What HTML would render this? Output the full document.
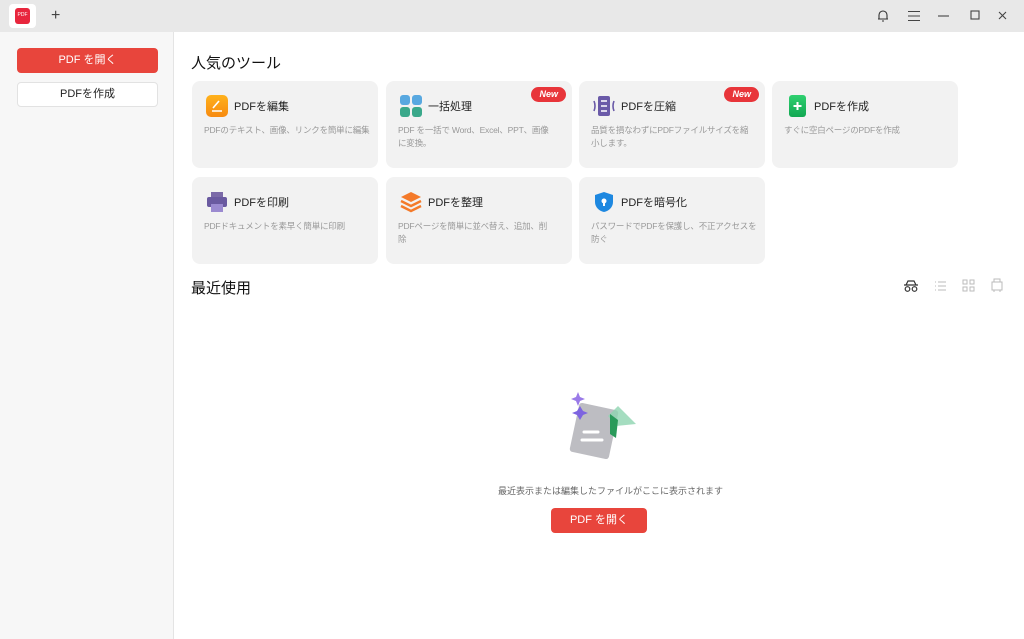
<!DOCTYPE html>
<html><head><meta charset="utf-8"><style>
*{margin:0;padding:0;box-sizing:border-box}
body{width:1024px;height:639px;overflow:hidden;background:#fff;font-family:"Liberation Sans","Noto Sans CJK JP",sans-serif;position:relative}
.tb{position:absolute;left:0;top:0;width:1024px;height:32px;background:#e8e8e8}
.side{position:absolute;left:0;top:32px;width:174px;height:607px;background:#f7f7f7;border-right:1px solid #e4e4e4}
.btn{position:absolute;left:17px;width:141px;height:25px;border-radius:4px;font-size:11px;text-align:center;line-height:25px}
.card{position:absolute;width:186px;height:87px;background:#f2f2f2;border-radius:8px}
.card .t{position:absolute;left:42px;top:17px;font-size:11px;color:#222}
.card .d{position:absolute;left:12px;top:43px;width:172px;font-size:8.5px;line-height:13px;color:#999;letter-spacing:-0.2px}
.card .ic{position:absolute;left:14px;top:14px;width:22px;height:22px}
.new{position:absolute;right:6px;top:6px;background:#e8353a;color:#fff;font-size:9px;font-weight:bold;font-style:italic;border-radius:8px;padding:1px 8px;line-height:13px}
h2{position:absolute;font-size:15px;font-weight:normal;color:#111}
</style></head><body>
<div class="tb">
<div style="position:absolute;left:9px;top:4px;width:27px;height:24px;background:#fff;border-radius:4px"><div style="position:absolute;left:6px;top:4px;width:15px;height:16px;background:#e8263d;border-radius:3px;color:#fff;font-size:5px;line-height:14px;text-align:center">PDF</div></div>
<div style="position:absolute;left:51px;top:7px;font-size:16px;color:#444">+</div>
<svg style="position:absolute;left:876px;top:9px" width="14" height="14" viewBox="0 0 14 14" fill="none" stroke="#333" stroke-width="1.1"><path d="M3 10V6a4 4 0 018 0v4H2h10M6 12h2"/></svg>
<svg style="position:absolute;left:907px;top:10px" width="14" height="12" stroke="#444" stroke-width="1.1"><path d="M1 1.5h12M1 6h12M1 10.5h12"/></svg>
<svg style="position:absolute;left:937px;top:10px" width="14" height="12" stroke="#444" stroke-width="1.1"><path d="M1 6h11"/></svg>
<svg style="position:absolute;left:970px;top:10px" width="12" height="12" fill="none" stroke="#444" stroke-width="1.1"><rect x="1" y="1" width="8" height="8"/></svg>
<svg style="position:absolute;left:998px;top:11px" width="10" height="10" stroke="#444" stroke-width="1.1"><path d="M1 1l7 7M8 1l-7 7"/></svg>
</div>
<div class="side">
<div class="btn" style="top:16px;background:#e8453c;color:#fff">PDF を開く</div>
<div class="btn" style="top:50px;background:#fff;border:1px solid #e2e2e2;color:#222;line-height:23px">PDFを作成</div>
</div>
<h2 style="left:191px;top:52px">人気のツール</h2>
<div class="card" style="left:192px;top:81px"><div class="ic" style="background:linear-gradient(#ffb21c,#f78a10);border-radius:5px"><svg width="22" height="22" stroke="#fff" stroke-width="1.6"><path d="M6 16h10M7 13l6-7"/></svg></div><div class="t">PDFを編集</div><div class="d">PDFのテキスト、画像、リンクを簡単に編集</div></div>
<div class="card" style="left:386px;top:81px"><div class="ic"><svg width="22" height="22"><rect x="0" y="0" width="10" height="10" rx="3" fill="#58a8e0"/><rect x="12" y="0" width="10" height="10" rx="3" fill="#58a8e0"/><rect x="0" y="12" width="10" height="10" rx="3" fill="#3aa88a"/><rect x="12" y="12" width="10" height="10" rx="3" fill="#3aa88a"/></svg></div><div class="t">一括処理</div><div class="d">PDF を一括で Word、Excel、PPT、画像<br>に変換。</div><div class="new">New</div></div>
<div class="card" style="left:579px;top:81px"><div class="ic"><svg width="24" height="22"><rect x="5" y="1" width="12" height="20" rx="2" fill="#6a5aa8"/><path d="M8 6h6M8 11h6M8 16h6" stroke="#fff" stroke-width="1.5"/><path d="M1 6q2 5 0 10M21 6q-2 5 0 10" stroke="#6a5aa8" stroke-width="1.6" fill="none"/></svg></div><div class="t">PDFを圧縮</div><div class="d">品質を損なわずにPDFファイルサイズを縮<br>小します。</div><div class="new">New</div></div>
<div class="card" style="left:772px;top:81px"><div class="ic" style="left:17px;width:17px;background:linear-gradient(#2fd070,#12a752);border-radius:3px"><svg width="17" height="22" stroke="#fff" stroke-width="2"><path d="M8.5 7v8M4.5 11h8"/></svg></div><div class="t">PDFを作成</div><div class="d">すぐに空白ページのPDFを作成</div></div>
<div class="card" style="left:192px;top:177px"><div class="ic"><svg width="22" height="22"><rect x="5" y="1" width="12" height="5" fill="#7b6aa8"/><rect x="1" y="6" width="20" height="10" rx="2" fill="#6a5aa0"/><rect x="5" y="13" width="12" height="8" fill="#9b8ad0"/></svg></div><div class="t">PDFを印刷</div><div class="d">PDFドキュメントを素早く簡単に印刷</div></div>
<div class="card" style="left:386px;top:177px"><div class="ic"><svg width="22" height="22"><path d="M11 1l10 5-10 5-10-5z" fill="#f47a2a"/><path d="M1 10l10 5 10-5M1 15l10 5 10-5" stroke="#f47a2a" stroke-width="2.4" fill="none"/></svg></div><div class="t">PDFを整理</div><div class="d">PDFページを簡単に並べ替え、追加、削<br>除</div></div>
<div class="card" style="left:579px;top:177px"><div class="ic"><svg width="22" height="22"><path d="M11 1l9 3v7c0 5-4 9-9 10-5-1-9-5-9-10V4z" fill="#1e88e0"/><circle cx="11" cy="10" r="2.5" fill="#fff"/><rect x="10" y="10" width="2" height="5" fill="#fff"/></svg></div><div class="t">PDFを暗号化</div><div class="d">パスワードでPDFを保護し、不正アクセスを<br>防ぐ</div></div>
<h2 style="left:191px;top:277px">最近使用</h2>
<svg style="position:absolute;left:903px;top:279px" width="16" height="14" fill="none" stroke="#333" stroke-width="1.2"><path d="M3 6l2-4h6l2 4M1 6h14"/><circle cx="4.5" cy="10" r="2.3"/><circle cx="11.5" cy="10" r="2.3"/></svg>
<svg style="position:absolute;left:934px;top:280px" width="12" height="12" stroke="#bbb"><path d="M1 2h1M4 2h8M1 6h1M4 6h8M1 10h1M4 10h8"/></svg>
<svg style="position:absolute;left:962px;top:279px" width="13" height="13" fill="none" stroke="#bbb"><rect x="1" y="1" width="4" height="4"/><rect x="8" y="1" width="4" height="4"/><rect x="1" y="8" width="4" height="4"/><rect x="8" y="8" width="4" height="4"/></svg>
<svg style="position:absolute;left:990px;top:278px" width="14" height="15" fill="none" stroke="#bbb"><rect x="2" y="4" width="10" height="8"/><path d="M4 4V1h6v3M4 14v-2M10 14v-2"/></svg>
<svg style="position:absolute;left:560px;top:390px" width="80" height="80">
<rect x="14" y="16" width="40" height="50" rx="3" fill="#bdbdc2" transform="rotate(12 34 41)"/>
<path d="M24 42h14M22 50h20" stroke="#fff" stroke-width="3" stroke-linecap="round"/>
<path d="M48 26l10-10 18 18-20 2z" fill="#8fd4b0" opacity=".8"/><path d="M50 24l8 6-2 18-6-4z" fill="#2a9a5a"/>
<path d="M18 2l2 5 5 2-5 2-2 5-2-5-5-2 5-2z" fill="#9a7ae8"/><path d="M20 16l3 5 5 2-5 2-3 5-3-5-5-2 5-2z" fill="#7d64e0"/>
</svg>
<div style="position:absolute;left:498px;top:484px;font-size:9px;color:#666">最近表示または編集したファイルがここに表示されます</div>
<div style="position:absolute;left:551px;top:508px;width:96px;height:25px;background:#e8453c;border-radius:4px;color:#fff;font-size:11px;text-align:center;line-height:25px">PDF を開く</div>
</body></html>
